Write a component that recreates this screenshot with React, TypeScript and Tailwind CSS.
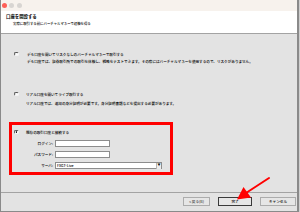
import React from 'react'

// small sunken radio button
function Radio({ on }: { on?: boolean }) {
  return (
    <span className="flex h-[4.5px] w-[4.5px] shrink-0 items-center justify-center rounded-full border-[0.5px] border-t-[#555] border-l-[#555] border-b-[#f4f4f4] border-r-[#f4f4f4] bg-[#fafafa]">
      {on && <span className="h-[1.5px] w-[1.5px] rounded-full bg-[#111]" />}
    </span>
  )
}

function Field({ label, value, combo }: { label: string; value?: string; combo?: boolean }) {
  return (
    <div className="flex h-[7px] items-center gap-[2px]">
      <span className="w-[41px] text-right">{label}</span>
      <div
        className={
          'flex h-[7px] items-center border-[0.5px] border-[#8c8c8c] bg-white pl-[1px] ' +
          (combo ? 'w-[107px] justify-between' : 'w-[55px]')
        }
      >
        <span>{value ?? ''}</span>
        {combo && (
          <span className="flex h-[6px] w-[5px] items-center justify-center border-l-[0.5px] border-[#b5b5b5] bg-[#ececec] text-[3px]">
            ▼
          </span>
        )}
      </div>
    </div>
  )
}

export default function App() {
  return (
    <div className="relative h-[212px] w-[300px] overflow-hidden bg-[#cfcfcf] font-['Noto_Sans_CJK_JP',sans-serif] text-[3.6px] font-medium leading-[5px] text-black">
      <div className="flex h-[212px] w-[299px] flex-col border-b border-l border-r-2 border-[#8a8a8a] bg-[#e3e3e3]">
        {/* title bar */}
        <div className="flex h-[11px] items-center gap-[2.5px] bg-[#f7f2ed] pl-[0.5px]">
          <span className="h-[5px] w-[5px] rounded-full bg-[#fe5f57]" />
          <span className="h-[5px] w-[5px] rounded-full bg-[#d8d5d2]" />
          <span className="h-[5px] w-[5px] rounded-full bg-[#d8d5d2]" />
        </div>

        {/* header */}
        <div className="h-[23px] border-b border-[#a3a3a3] bg-white pl-[5px] pt-[2.5px]">
          <div className="text-[4.4px] font-bold">口座を開設する</div>
          <div className="ml-[7px] mt-[2px] text-[3.4px]">実際に取引する前にバーチャルマネーで経験を得る</div>
        </div>

        {/* body */}
        <div className="h-[158px] pt-[17.5px]">
          <div className="flex items-center gap-[8.5px] pl-[13px]">
            <Radio />
            <span>デモ口座を開いてリスクなしのバーチャルマネーで取引する</span>
          </div>
          <div className="mt-[2px] pl-[26px]">
            デモ口座では、証券取引所での取引を体験し、戦略をテストできます。その際にはバーチャルマネーを使用するので、リスクがありません。
          </div>

          <div className="mt-[28px] flex items-center gap-[7.5px] pl-[13px]">
            <Radio />
            <span>リアル口座を開いてライブ取引する</span>
          </div>
          <div className="mt-[4px] pl-[25px]">
            リアル口座では、追加の身分証明が必要です。身分証明書類などを提出する必要があります。
          </div>

          <div className="ml-[8px] mt-[16.5px] h-[53px] w-[164px] border-[3px] border-[#ff0000] pt-[4.5px]">
            <div className="flex items-center gap-[7.5px] pl-[2px]">
              <Radio on />
              <span>既存の取引口座と接続する</span>
            </div>
            <div className="mt-[5.5px] flex flex-col gap-[4px]">
              <Field label="ログイン:" />
              <Field label="パスワード:" />
              <Field label="サーバ:" value="FXGT-Live" combo />
            </div>
          </div>
        </div>

        {/* footer */}
        <div className="flex flex-1 justify-end gap-[8px] border-t border-[#a3a3a3] pr-[1px] pt-[4px]">
          <button className="flex h-[9px] w-[27px] items-center justify-center border-[0.5px] border-[#acacac] bg-[#e6e6e6] text-[#444]">
            &lt; 戻る(B)
          </button>
          <button className="flex h-[9px] w-[34px] items-center justify-center border border-[#3a3a3a] bg-[#e6e6e6]">
            完了
          </button>
          <button className="flex h-[9px] w-[36px] items-center justify-center border-[0.5px] border-[#acacac] bg-[#e6e6e6]">
            キャンセル
          </button>
        </div>
      </div>

      {/* annotation arrow */}
      <svg className="pointer-events-none absolute left-0 top-0" width="300" height="212" viewBox="0 0 300 212">
        <line x1="269" y1="178" x2="246" y2="193" stroke="#ff0000" strokeWidth="2" strokeLinecap="round" />
        <polygon points="237,199.5 243.5,187 251,197.5" fill="#ff0000" />
      </svg>
    </div>
  )
}
